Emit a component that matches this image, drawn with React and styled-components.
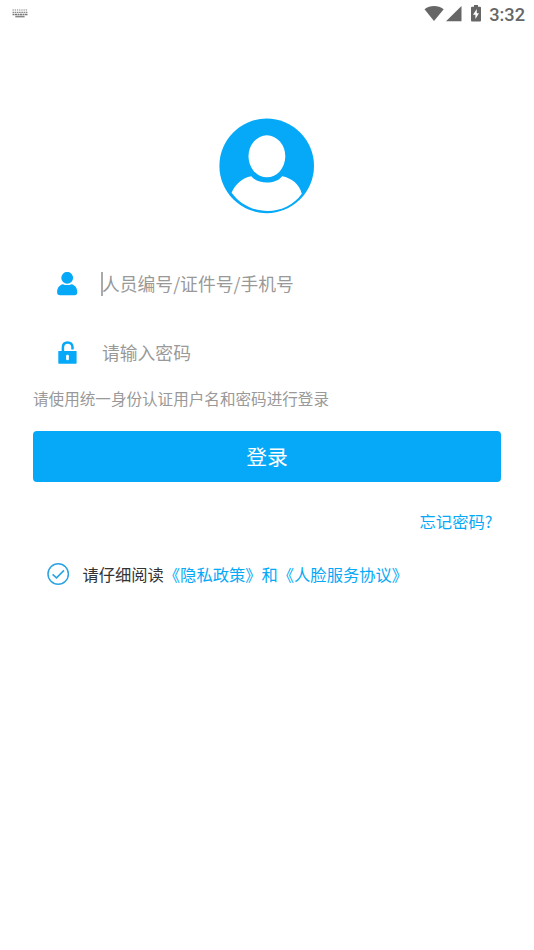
import React, { useState } from "react";
import styled, { createGlobalStyle } from "styled-components";

const GlobalStyle = createGlobalStyle`
  * {
    box-sizing: border-box;
  }
  body {
    margin: 0;
    background: #fff;
    font-family: "Noto Sans CJK SC", sans-serif;
  }
`;

// Icons
const KeyboardIcon = () => (
  <svg width="16" height="9" viewBox="0 0 16 9" fill="none">
    <path d="M0.5 1H16" stroke="#aaa" strokeWidth="1.4" strokeDasharray="1.3 0.9" />
    <path d="M0.5 3.4H16" stroke="#888" strokeWidth="1.3" strokeDasharray="1.6 0.6" />
    <path d="M0.5 5.5H16" stroke="#777" strokeWidth="1.3" strokeDasharray="2 0.5" />
    <path d="M3.3 7.6H12.6" stroke="#888" strokeWidth="1.6" />
  </svg>
);

const WifiIcon = () => (
  <svg width="20" height="16" viewBox="0 0 20 16" fill="#666">
    <path d="M0.5 3.2C6 -1 14 -1 19.7 3.2L10 15Z" />
  </svg>
);

const SignalIcon = () => (
  <svg width="16" height="16" viewBox="0 0 16 16" fill="#666">
    <path d="M15.5 0V15.2H0Z" />
  </svg>
);

const BatteryIcon = () => (
  <svg width="10" height="17" viewBox="0 0 10 17">
    <path d="M3 0H7V1.8H9Q10 1.8 10 2.8V15.5Q10 16.5 9 16.5H1Q0 16.5 0 15.5V2.8Q0 1.8 1 1.8H3Z" fill="#666" />
    <path d="M5.8 4L2 9.8H4.4V14L8 8.2H5.8Z" fill="#fff" />
  </svg>
);

const Avatar = () => (
  <svg width="96" height="96" viewBox="0 0 96 96">
    <circle cx="47.7" cy="47.9" r="47.3" fill="#06a9f7" />
    <ellipse cx="47.9" cy="38.3" rx="18.4" ry="21" fill="#fff" />
    <path
      d="M12.6 74.7C16.5 66 23 60 32.3 58.2C36 62.7 41.5 64.5 47.8 64.5C54 64.5 59.5 62.7 63.2 58.2C72.5 60 80.5 66 82.8 75.7C75 86.7 62.5 92.9 48.5 92.9C34.5 92.9 21.5 86.7 12.6 74.7Z"
      fill="#fff"
    />
  </svg>
);

const UserIcon = () => (
  <svg width="21" height="24" viewBox="0 0 21 24" fill="#06a9f7">
    <circle cx="10.2" cy="5.8" r="5.9" />
    <path d="M6 12.2C7.2 12.8 8.6 13.1 10.2 13.1C11.8 13.1 13.2 12.8 14.4 12.2C18 12.9 20.3 15.8 20.3 20.2Q20.3 23.2 17.4 23.2H3Q0.1 23.2 0.1 20.2C0.1 15.8 2.4 12.9 6 12.2Z" />
  </svg>
);

const LockIcon = () => (
  <svg width="21" height="24" viewBox="0 0 21 24">
    <path
      d="M5.9 11V6.5C5.9 3.4 7.8 1.4 10.7 1.4C13.5 1.4 15.5 3.3 15.5 6.2V8.4"
      fill="none"
      stroke="#06a9f7"
      strokeWidth="2.5"
    />
    <rect x="1.3" y="10" width="18.3" height="12.7" rx="0.6" fill="#06a9f7" />
    <rect x="9.1" y="13.8" width="2.8" height="5.4" rx="1.3" fill="#fff" />
  </svg>
);

const CheckIcon = ({ checked }) => (
  <svg width="22" height="22" viewBox="0 0 22 22" fill="none" stroke="#2ba3e3">
    <circle cx="11.2" cy="11" r="10.2" strokeWidth="1.5" />
    {checked && <path d="M5.6 11.3L9.5 14.9L17 7.4" strokeWidth="1.6" />}
  </svg>
);

const Login = () => {
  const [agreed, setAgreed] = useState(true);

  return (
    <>
      <GlobalStyle />
      <Page>
        <StatusBar>
          <KeyboardIcon />
          <StatusRight>
            <WifiIcon />
            <SignalIcon />
            <BatteryWrap>
              <BatteryIcon />
            </BatteryWrap>
            <Clock>3:32</Clock>
          </StatusRight>
        </StatusBar>
        <AvatarWrap>
          <Avatar />
        </AvatarWrap>
        <Form onSubmit={(e) => e.preventDefault()}>
          <Field>
            <UserIcon />
            <Cursor />
            <Input type="text" placeholder="人员编号/证件号/手机号" />
          </Field>
          <Field>
            <LockIcon />
            <Cursor $hidden />
            <Input type="password" placeholder="请输入密码" />
          </Field>
          <Tip>请使用统一身份认证用户名和密码进行登录</Tip>
          <Submit type="submit">登录</Submit>
          <Forgot>忘记密码?</Forgot>
          <Agreement onClick={() => setAgreed(!agreed)}>
            <CheckIcon checked={agreed} />
            <p>
              请仔细阅读<span>《隐私政策》和《人脸服务协议》</span>
            </p>
          </Agreement>
        </Form>
      </Page>
    </>
  );
};

export default Login;

// Styles
const Page = styled.div`
  width: 100%;
  min-height: 950px;
  background: #fff;
`;

const StatusBar = styled.div`
  height: 27px;
  padding: 0 9px 0 12px;
  display: flex;
  align-items: center;
  justify-content: space-between;
`;

const StatusRight = styled.div`
  display: flex;
  align-items: center;
  gap: 2px;
`;

const BatteryWrap = styled.div`
  display: flex;
  margin-left: 7px;
`;

const Clock = styled.span`
  margin-left: 6px;
  padding-top: 2px;
  font: 500 18.2px/25px Roboto, sans-serif;
  color: #666;
`;

const AvatarWrap = styled.div`
  display: flex;
  justify-content: center;
  padding-top: 91px;
  height: 222px;
`;

const Form = styled.form`
  display: flex;
  flex-direction: column;
  padding: 0 33px;
`;

const Field = styled.label`
  display: flex;
  align-items: center;
  height: 69px;
  padding-left: 24px;
`;

const Cursor = styled.i`
  width: 2px;
  height: 24px;
  margin: 0 -1px 0 23px;
  background: ${(props) => (props.$hidden ? "transparent" : "#aaa")};
`;

const Input = styled.input`
  flex: 1;
  height: 40px;
  padding: 0 0 2px;
  border: none;
  outline: none;
  background: none;
  font-family: inherit;
  font-size: 17.8px;
  color: #333;

  &::placeholder {
    color: #999;
    opacity: 1;
  }
`;

const Tip = styled.p`
  margin: -1px 0 0;
  height: 45px;
  font-size: 15.58px;
  line-height: 24px;
  color: #999;
`;

const Submit = styled.button`
  height: 51px;
  padding: 0;
  border: none;
  border-radius: 4px;
  background: #06a9f7;
  color: #fff;
  font-family: inherit;
  font-size: 20.8px;
  line-height: 51px;
`;

const Forgot = styled.a`
  align-self: flex-end;
  margin: 27px 8.6px 0 0;
  font-size: 16.3px;
  line-height: 24px;
  color: #06a9f7;
`;

const Agreement = styled.div`
  display: flex;
  align-items: center;
  gap: 13.4px;
  margin-top: 29px;
  padding-left: 14px;

  p {
    margin: 0;
    font-size: 16.3px;
    line-height: 24px;
    color: #333;
  }
  span {
    color: #06a9f7;
  }
`;
